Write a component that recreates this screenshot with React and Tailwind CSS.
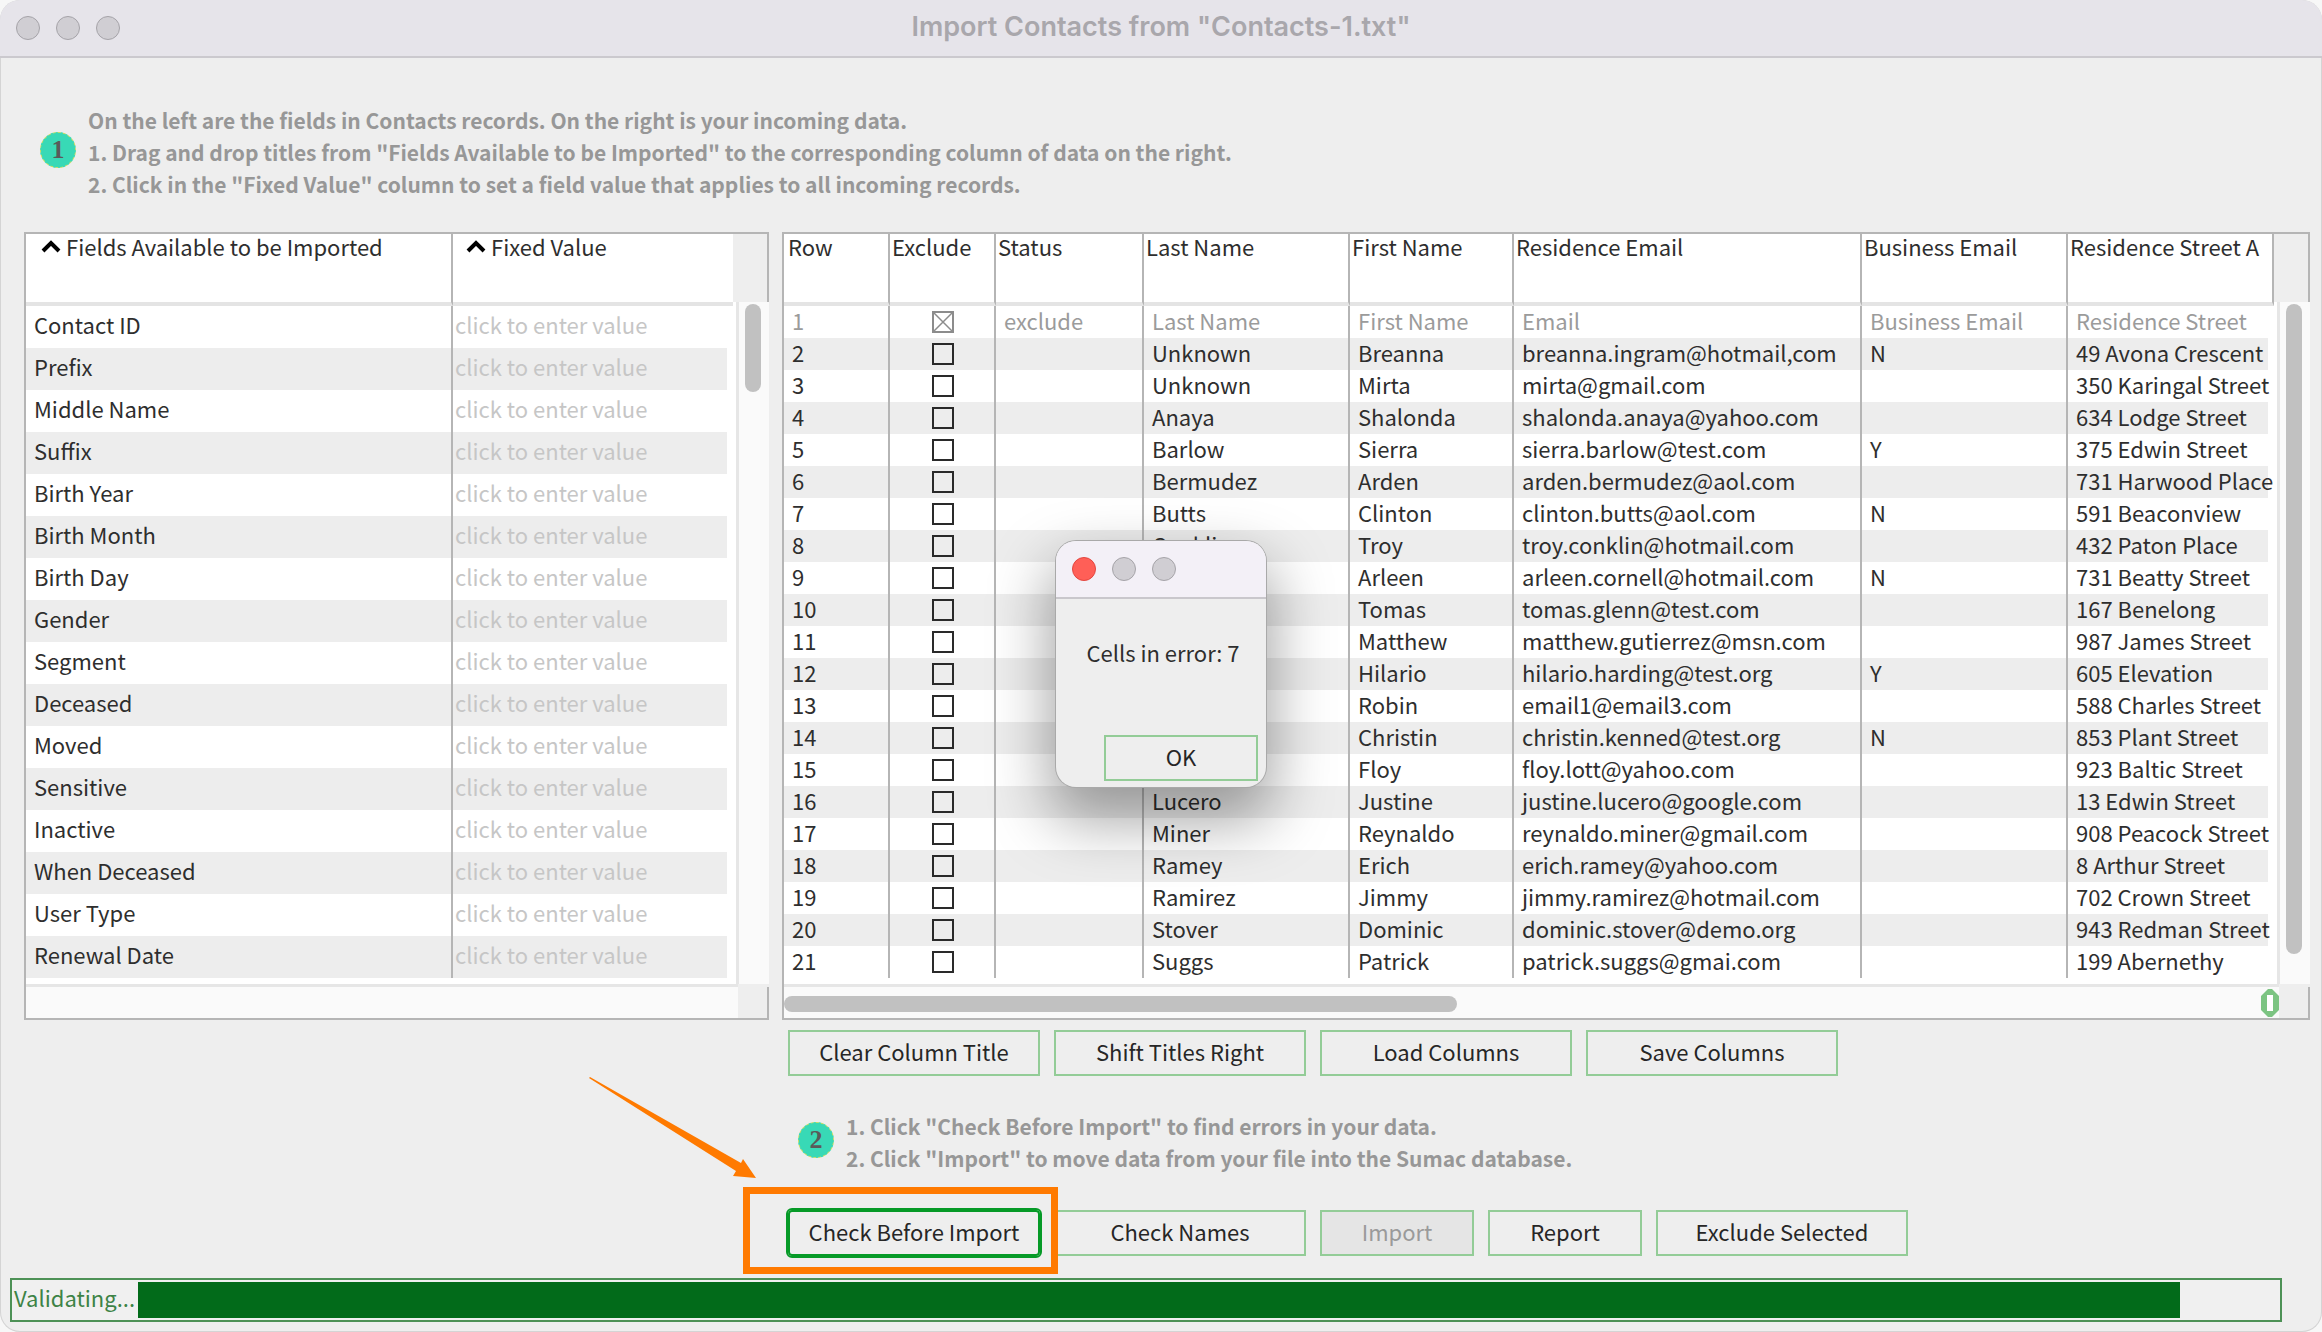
import React from "react";

const fields = [
  "Contact ID",
  "Prefix",
  "Middle Name",
  "Suffix",
  "Birth Year",
  "Birth Month",
  "Birth Day",
  "Gender",
  "Segment",
  "Deceased",
  "Moved",
  "Sensitive",
  "Inactive",
  "When Deceased",
  "User Type",
  "Renewal Date",
];

const columns = [
  { title: "Row", width: "w-[106px]" },
  { title: "Exclude", width: "w-[106px]" },
  { title: "Status", width: "w-[148px]" },
  { title: "Last Name", width: "w-[206px]" },
  { title: "First Name", width: "w-[164px]" },
  { title: "Residence Email", width: "w-[348px]" },
  { title: "Business Email", width: "w-[206px]" },
  { title: "Residence Street A", width: "w-auto" },
];

// status, last name, first name, residence email, business email, street
const records = [
  ["exclude", "Last Name", "First Name", "Email", "Business Email", "Residence Street"],
  ["", "Unknown", "Breanna", "breanna.ingram@hotmail,com", "N", "49 Avona Crescent"],
  ["", "Unknown", "Mirta", "mirta@gmail.com", "", "350 Karingal Street"],
  ["", "Anaya", "Shalonda", "shalonda.anaya@yahoo.com", "", "634 Lodge Street"],
  ["", "Barlow", "Sierra", "sierra.barlow@test.com", "Y", "375 Edwin Street"],
  ["", "Bermudez", "Arden", "arden.bermudez@aol.com", "", "731 Harwood Place"],
  ["", "Butts", "Clinton", "clinton.butts@aol.com", "N", "591 Beaconview"],
  ["", "Conklin", "Troy", "troy.conklin@hotmail.com", "", "432 Paton Place"],
  ["", "Cornell", "Arleen", "arleen.cornell@hotmail.com", "N", "731 Beatty Street"],
  ["", "Glenn", "Tomas", "tomas.glenn@test.com", "", "167 Benelong"],
  ["", "Gutierrez", "Matthew", "matthew.gutierrez@msn.com", "", "987 James Street"],
  ["", "Harding", "Hilario", "hilario.harding@test.org", "Y", "605 Elevation"],
  ["", "Hudson", "Robin", "email1@email3.com", "", "588 Charles Street"],
  ["", "Kenned", "Christin", "christin.kenned@test.org", "N", "853 Plant Street"],
  ["", "Lott", "Floy", "floy.lott@yahoo.com", "", "923 Baltic Street"],
  ["", "Lucero", "Justine", "justine.lucero@google.com", "", "13 Edwin Street"],
  ["", "Miner", "Reynaldo", "reynaldo.miner@gmail.com", "", "908 Peacock Street"],
  ["", "Ramey", "Erich", "erich.ramey@yahoo.com", "", "8 Arthur Street"],
  ["", "Ramirez", "Jimmy", "jimmy.ramirez@hotmail.com", "", "702 Crown Street"],
  ["", "Stover", "Dominic", "dominic.stover@demo.org", "", "943 Redman Street"],
  ["", "Suggs", "Patrick", "patrick.suggs@gmai.com", "", "199 Abernethy"],
];

const Light = ({ label, red }) => (
  <button
    type="button"
    aria-label={label}
    className={`size-6 rounded-full border ${
      red ? "border-[#e2463f] bg-[#ff5f57]" : "border-[#a5a3a8] bg-[#d0ced3]"
    }`}
  />
);

const StepBadge = ({ children }) => (
  <span className="mb-1 flex size-9 shrink-0 items-center justify-center rounded-full border border-dashed border-[#c3dc62] bg-[#38d9b6] font-['Liberation_Serif',serif] text-[26px] leading-none font-bold text-[#5a5a5a]">
    {children}
  </span>
);

const Button = ({ children, wide = true, focused, disabled }) => (
  <button
    type="button"
    disabled={disabled}
    className={`h-[46px] border-2 pb-1 leading-7 ${wide ? "w-[252px]" : "w-[154px]"} ${
      focused
        ? "rounded-sm border-[#069a27] outline-2 outline-[#069a27]"
        : "border-[#93cc97]"
    } ${disabled ? "bg-[#e5e5e5] text-[#9a9a9a]" : "bg-[#eeeeee] text-[#262626]"}`}
  >
    {children}
  </button>
);

const SortMark = () => (
  <svg viewBox="0 0 20 14" className="h-[14px] w-5" aria-hidden="true">
    <path d="M2 12 L10 4 L18 12" fill="none" stroke="#000" strokeWidth="4" />
  </svg>
);

const Exclude = ({ row, checked }) => (
  <span className="relative mx-auto block size-[22px]">
    <input
      type="checkbox"
      aria-label={`Exclude row ${row}`}
      defaultChecked={checked}
      className={`block size-[22px] appearance-none border-2 ${
        checked ? "border-[#8c8c8c]" : "border-[#2a2a2a]"
      }`}
    />
    {checked && (
      <svg viewBox="0 0 22 22" className="pointer-events-none absolute inset-0">
        <path d="M2 2 L20 20 M20 2 L2 20" stroke="#8c8c8c" strokeWidth="1.5" />
      </svg>
    )}
  </span>
);

// Framed table with its two scroll bars
const ScrollPanel = ({ children, thumb, bottom, handle }) => (
  <div className="border-t-2 border-b-2 border-l-2 border-[#b5b5b5]">
    <div className="flex bg-white">
      <div className="min-w-0 flex-1 pb-[6px]">{children}</div>
      <div className="flex w-[36px] flex-col">
        <div className="h-[68px] border-r-2 border-[#b5b5b5] bg-[#eeeeee]" />
        <div className="flex flex-1">
          <div className="w-[6px] border-r-[3px] border-[#e6e6e6] bg-white" />
          <div className="flex-1 bg-[#fafafa] pt-[2px] pl-[6px]">
            <div className={`w-4 rounded-full bg-[#c1c1c1] ${thumb}`} />
          </div>
        </div>
      </div>
    </div>
    <div className="flex h-[34px]">
      <div className="flex-1 border-t-[3px] border-[#e6e6e6] bg-[#fafafa] pt-[9px]">
        {bottom && <div className="h-4 w-[45%] rounded-full bg-[#c1c1c1]" />}
      </div>
      <div className="relative mt-[3px] w-[31px] border-r-2 border-[#b5b5b5] bg-[#eeeeee]">
        {handle && (
          <svg viewBox="0 0 18 28" className="absolute top-[2px] -left-[18px] h-7 w-[18px]">
            <path d="M7 0 H11 L18 7 V21 L11 28 H7 L0 21 V7 Z" fill="#7cc482" />
            <path d="M6 6 H12 V22 H6 Z" fill="#fff" />
          </svg>
        )}
      </div>
    </div>
  </div>
);

const headCell =
  "h-[72px] border-b-4 border-b-[#e4e4e4] p-0 align-top leading-6 font-normal whitespace-nowrap";

const FieldsTable = () => (
  <table className="w-full table-fixed border-separate border-spacing-0 text-left">
    <thead>
      <tr>
        <th className={`${headCell} w-[427px] border-r-2 border-r-[#b5b5b5]`}>
          <span className="flex items-center gap-[5px] pl-[15px]">
            <SortMark />
            Fields Available to be Imported
          </span>
        </th>
        <th className={headCell}>
          <span className="flex items-center gap-[5px] pl-[13px]">
            <SortMark />
            Fixed Value
          </span>
        </th>
        <th className={`${headCell} w-[6px]`} />
      </tr>
    </thead>
    <tbody>
      {fields.map((field, i) => (
        <tr key={field} className="h-[42px]">
          <td
            className={`border-r-2 border-[#b5b5b5] p-0 pb-[6px] pl-2 leading-7 ${
              i % 2 ? "bg-[#ededed]" : "bg-white"
            }`}
          >
            {field}
          </td>
          <td className={`p-0 pb-[6px] pl-[2px] ${i % 2 ? "bg-[#ededed]" : "bg-white"}`}>
            <input
              type="text"
              aria-label={`Fixed value for ${field}`}
              placeholder="click to enter value"
              className="block h-8 w-full bg-transparent leading-8 placeholder:text-[#c6c6c6]"
            />
          </td>
          <td />
        </tr>
      ))}
    </tbody>
  </table>
);

const RecordsTable = () => (
  <table className="w-full table-fixed border-separate border-spacing-0 text-left">
    <thead>
      <tr>
        {columns.map(({ title, width }, i) => (
          <th
            key={title}
            className={`${headCell} ${width} border-r-2 border-r-[#b5b5b5] ${
              i === 0 ? "pl-1" : "pl-[2px]"
            }`}
          >
            {title}
          </th>
        ))}
      </tr>
    </thead>
    <tbody>
      {records.map((record, i) => {
        const bg = i % 2 ? "bg-[#ededed]" : "bg-white";
        return (
          <tr key={i} className={`h-8 ${i === 0 ? "text-[#9b9b9b]" : ""}`}>
            <td className={`border-r-2 border-[#b5b5b5] p-0 pb-1 pl-2 leading-7 ${bg}`}>
              {i + 1}
            </td>
            <td className={`border-r-2 border-[#b5b5b5] p-0 pl-[2px] ${bg}`}>
              <Exclude row={i + 1} checked={i === 0} />
            </td>
            {record.map((value, j) => (
              <td
                key={j}
                className={`p-0 pb-1 pl-2 leading-7 whitespace-nowrap ${
                  j === 5
                    ? "border-r-[6px] border-white"
                    : "border-r-2 border-[#b5b5b5]"
                } ${bg}`}
              >
                {value}
              </td>
            ))}
          </tr>
        );
      })}
    </tbody>
  </table>
);

const ErrorDialog = () => (
  <div
    role="dialog"
    aria-label="Cells in error"
    className="absolute top-[541px] left-1/2 ml-[-105px] w-[210px] overflow-hidden rounded-[20px] bg-[#eeeeee] shadow-[0_0_0_1px_#a9a9a9,0_28px_60px_6px_rgba(0,0,0,0.36)]"
  >
    <div className="flex h-[58px] items-center gap-4 border-b-2 border-[#c9c7cc] bg-[#f3f0f7] px-4">
      <Light label="Close" red />
      <Light label="Minimize" />
      <Light label="Zoom" />
    </div>
    <p className="pt-[39px] pl-1 text-center leading-7">Cells in error: 7</p>
    <div className="flex justify-end pt-[69px] pr-2 pb-[6px]">
      <Button wide={false}>OK</Button>
    </div>
  </div>
);

export default function App() {
  return (
    <div className="min-h-screen bg-[#f7f7f7] font-['Noto_Sans_CJK_SC',sans-serif] text-[22px] text-[#2e2e2e]">
      <div className="relative min-h-screen overflow-hidden rounded-[20px] bg-[#eeeeee] inset-ring inset-ring-[#d4d4d4]">
        <header className="grid h-[58px] grid-cols-[1fr_auto_1fr] items-center border-b-2 border-[#cbc9ce] bg-[#e6e4ea] px-4">
          <div className="flex gap-4">
            <Light label="Close" />
            <Light label="Minimize" />
            <Light label="Zoom" />
          </div>
          <h1 className="pb-[2px] font-['Inter',sans-serif] text-[27px] leading-8 font-semibold text-[#a9a7ac]">
            Import Contacts from "Contacts-1.txt"
          </h1>
        </header>

        <main className="pt-[46px] pr-3 pl-6">
          <section className="flex items-center gap-3 pl-4 text-[21px] leading-8 font-bold text-[#979797]">
            <StepBadge>1</StepBadge>
            <div>
              <p>
                On the left are the fields in Contacts records. On the right is
                your incoming data.
              </p>
              <p>
                1. Drag and drop titles from "Fields Available to be Imported"
                to the corresponding column of data on the right.
              </p>
              <p>
                2. Click in the "Fixed Value" column to set a field value that
                applies to all incoming records.
              </p>
            </div>
          </section>

          <div className="mt-8 grid grid-cols-[745fr_1528fr] items-start gap-x-[13px]">
            <ScrollPanel thumb="h-[88px]">
              <FieldsTable />
            </ScrollPanel>

            <div className="min-w-0">
              <ScrollPanel thumb="h-[650px]" bottom handle>
                <RecordsTable />
              </ScrollPanel>

              <div className="mt-[10px] flex gap-[14px] pl-[6px]">
                <Button>Clear Column Title</Button>
                <Button>Shift Titles Right</Button>
                <Button>Load Columns</Button>
                <Button>Save Columns</Button>
              </div>

              <section className="mt-[34px] flex items-center gap-3 pl-4 text-[21px] leading-8 font-bold text-[#979797]">
                <StepBadge>2</StepBadge>
                <div>
                  <p>
                    1. Click "Check Before Import" to find errors in your data.
                  </p>
                  <p>
                    2. Click "Import" to move data from your file into the Sumac
                    database.
                  </p>
                </div>
              </section>

              <div className="mt-9 flex gap-[14px] pl-[6px]">
                <div className="relative">
                  <Button focused>Check Before Import</Button>
                  {/* callout around the button, with its arrow */}
                  <div className="pointer-events-none absolute -top-[23px] -right-[18px] -bottom-[18px] -left-[45px] z-10 border-[7px] border-[#ff7a00]" />
                  <svg
                    viewBox="0 0 168 103"
                    className="pointer-events-none absolute -top-[133px] -left-[199px] h-[103px] w-[168px]"
                  >
                    <path
                      d="M1 0 L152 86 L154 82 L167 101 L144 99 L147 94 L0 1 Z"
                      fill="#ff7a00"
                    />
                  </svg>
                </div>
                <Button>Check Names</Button>
                <Button wide={false} disabled>
                  Import
                </Button>
                <Button wide={false}>Report</Button>
                <Button>Exclude Selected</Button>
              </div>
            </div>
          </div>
        </main>

        <footer className="mt-[22px] mr-10 mb-[10px] ml-[10px] flex h-11 items-center border-2 border-[#4d9156] bg-[#f0f0f0] p-[2px] text-[#3d8346]">
          <span id="progress-label" className="w-[124px] pb-[6px] leading-7">
            Validating...
          </span>
          <div
            role="progressbar"
            aria-labelledby="progress-label"
            aria-valuenow={95}
            className="h-full flex-1"
          >
            <div className="h-full w-[95.4%] bg-[#026b1a]" />
          </div>
        </footer>

        <ErrorDialog />
      </div>
    </div>
  );
}
